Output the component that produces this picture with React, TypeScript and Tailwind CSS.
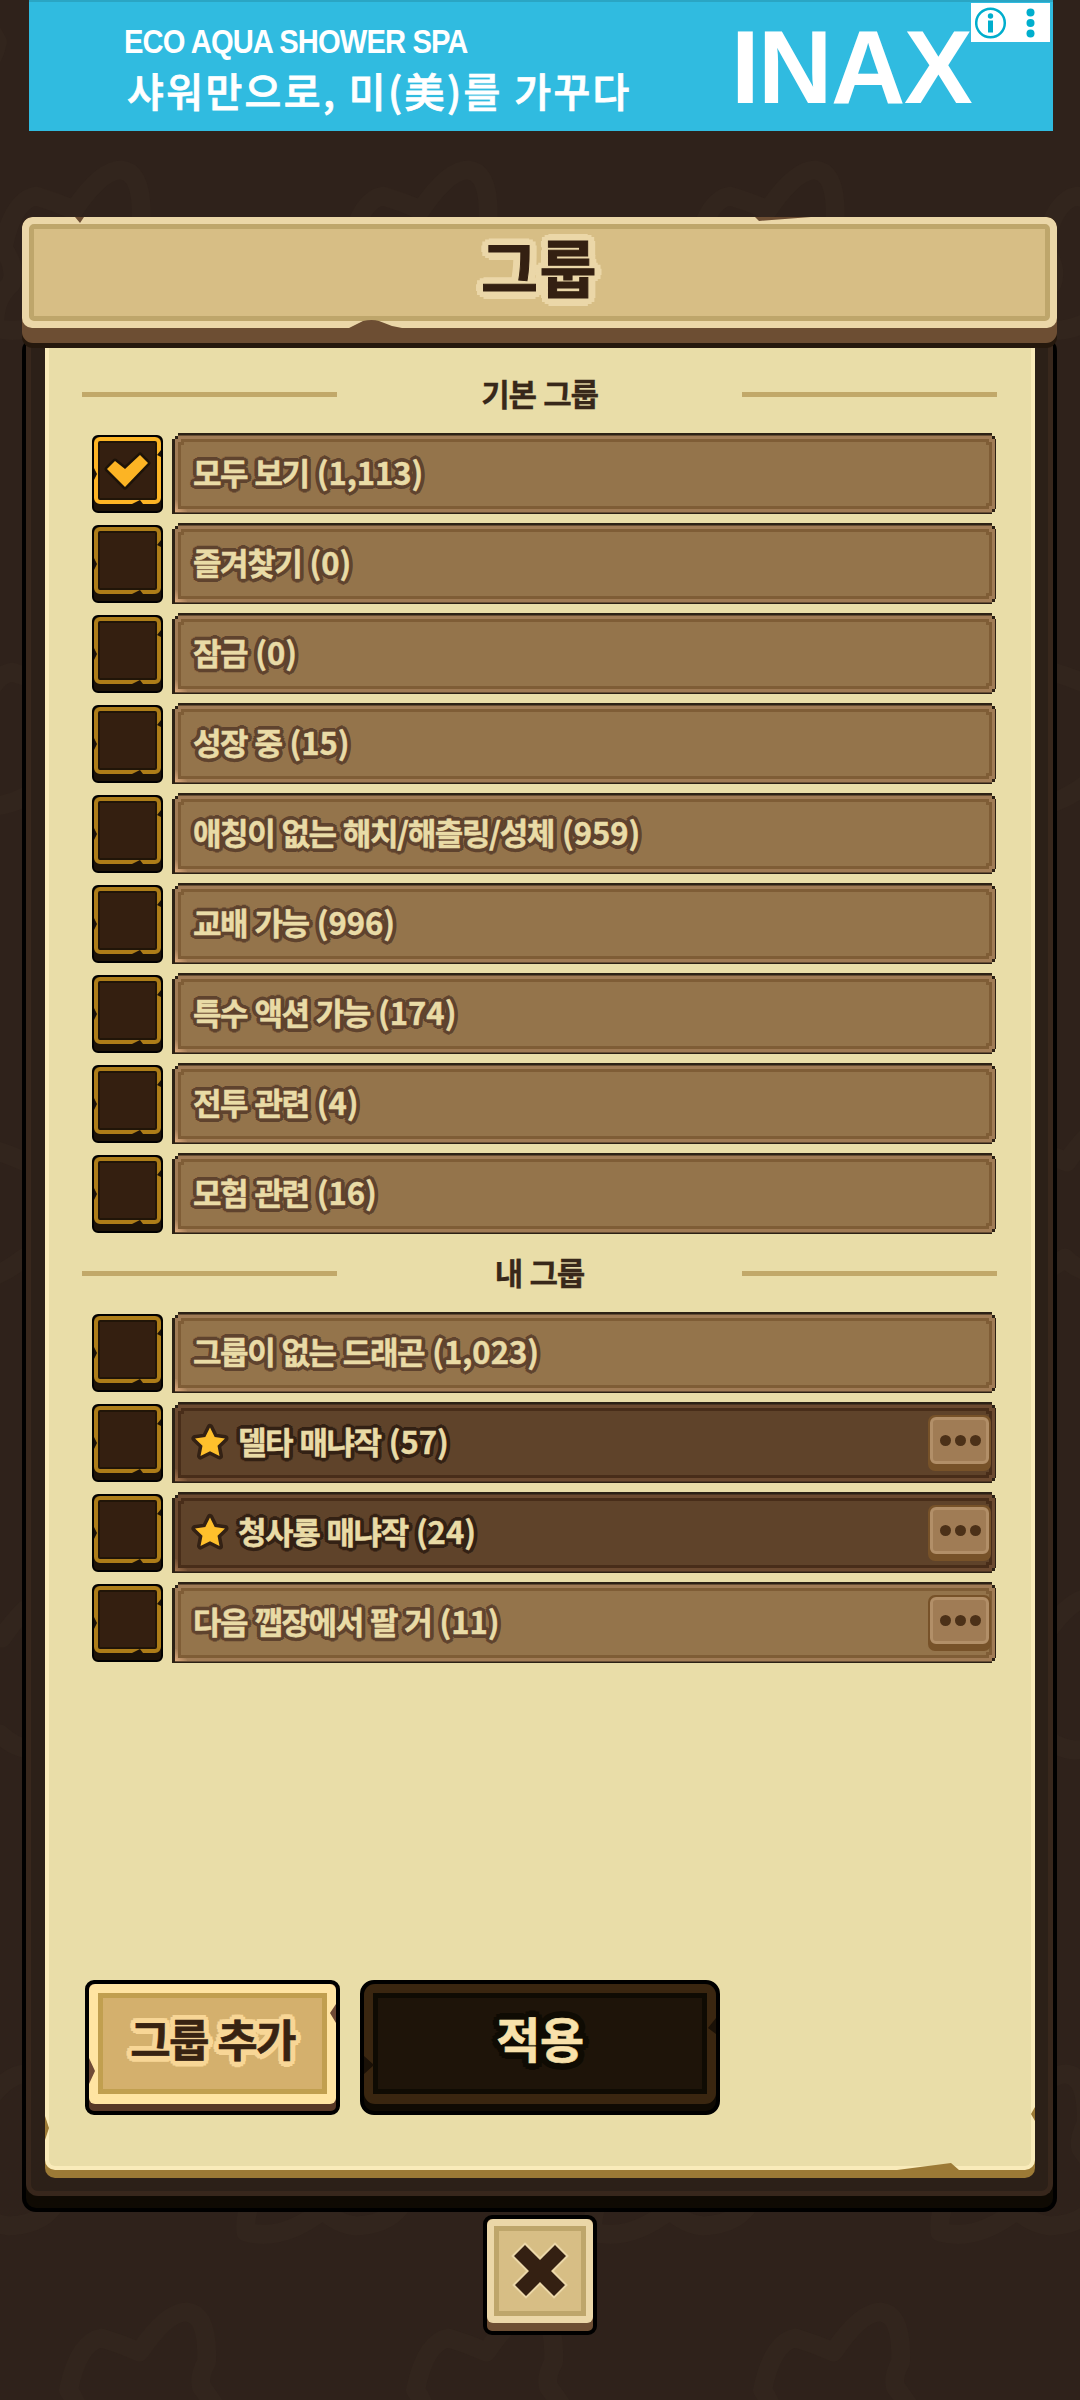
import { ReactNode } from "react";

const KR = "font-['Noto_Sans_CJK_KR',sans-serif]";

/* Rounded text outline: twelve hard shadows on a circle of radius --o in colour --c. */
const OUTLINE =
  "[text-shadow:var(--o)_0_var(--c),calc(var(--o)*0.866)_calc(var(--o)*0.5)_var(--c),calc(var(--o)*0.5)_calc(var(--o)*0.866)_var(--c),0_var(--o)_var(--c),calc(var(--o)*-0.5)_calc(var(--o)*0.866)_var(--c),calc(var(--o)*-0.866)_calc(var(--o)*0.5)_var(--c),calc(var(--o)*-1)_0_var(--c),calc(var(--o)*-0.866)_calc(var(--o)*-0.5)_var(--c),calc(var(--o)*-0.5)_calc(var(--o)*-0.866)_var(--c),0_calc(var(--o)*-1)_var(--c),calc(var(--o)*0.5)_calc(var(--o)*-0.866)_var(--c),calc(var(--o)*0.866)_calc(var(--o)*-0.5)_var(--c)]";

type Group = { name: string; count: string; checked?: boolean; starred?: boolean; menu?: boolean };

const defaultGroups: Group[] = [
  { name: "모두 보기", count: "(1,113)", checked: true },
  { name: "즐겨찾기", count: "(0)" },
  { name: "잠금", count: "(0)" },
  { name: "성장 중", count: "(15)" },
  { name: "애칭이 없는 해치/해츨링/성체", count: "(959)" },
  { name: "교배 가능", count: "(996)" },
  { name: "특수 액션 가능", count: "(174)" },
  { name: "전투 관련", count: "(4)" },
  { name: "모험 관련", count: "(16)" },
];

const myGroups: Group[] = [
  { name: "그룹이 없는 드래곤", count: "(1,023)" },
  { name: "델타 매냐작", count: "(57)", starred: true, menu: true },
  { name: "청사룡 매냐작", count: "(24)", starred: true, menu: true },
  { name: "다음 깹장에서 팔 거", count: "(11)", menu: true },
];

/* Faint dragon outlines repeated in staggered rows over the wall behind the dialog. */
function Backdrop() {
  const rows = Array.from({ length: 11 }, (_, i) => i - 1);
  return (
    <svg className="absolute inset-0 h-full w-full" aria-hidden="true">
      {rows.map((r) =>
        [0, 1, 2, 3, 4].map((c) => (
          <path
            key={`${r}-${c}`}
            transform={`translate(${((121 + r * 161.5 + 694) % 347) + (c - 1) * 347} ${160 + r * 238})`}
            d="M-118 88Q-108 40-85 36Q-65 42-47 50Q-20 10 0 10Q22 12 20 60Q12 75 15 85Q30 105 38 120Q30 160-16 162Q-35 160-49 146Q-90 178-126 168Q-128 140-110 124Q-104 108-118 88Z"
            fill="none"
            stroke="#32251d"
            strokeWidth="19"
            strokeLinejoin="round"
          />
        )),
      )}
    </svg>
  );
}

function AdBanner() {
  return (
    <div className="relative ml-[29px] flex h-[131px] w-[1024px] border-t-2 border-[#2aa5c4] bg-[#30bbe0] text-white">
      <div className="w-[702px] shrink-0 pl-[95px]">
        <div className="mt-[22px] h-[36px] origin-left scale-x-[0.884] whitespace-nowrap font-['Liberation_Sans',sans-serif] text-[33px] font-bold leading-[36px] tracking-[-1px]">
          ECO AQUA SHOWER SPA
        </div>
        <div className={`${KR} mt-[8px] ml-[3px] whitespace-nowrap text-[40px] font-medium leading-[44px] tracking-[2.4px] [-webkit-text-stroke:0.8px_white]`}>
          샤워만으로, 미(美)를 가꾸다
        </div>
      </div>
      <div className="mt-[10px] whitespace-nowrap font-['Liberation_Sans',sans-serif] text-[103px] font-bold leading-[112px] tracking-[-1.500px]">
        INAX
      </div>
      <div className="absolute right-[3px] top-[1px] flex h-[39px] w-[79px] items-center bg-white pl-[4px]">
        <svg width="75" height="38" viewBox="0 0 75 38" fill="#00aecd">
          <circle cx="15.500" cy="19" r="14.300" fill="none" stroke="#00aecd" strokeWidth="2.5" />
          <circle cx="15.500" cy="12" r="2.7" />
          <rect x="13" y="16.500" width="5" height="12" />
          <circle cx="55.500" cy="8.500" r="4" />
          <circle cx="55.500" cy="19" r="4" />
          <circle cx="55.500" cy="29.500" r="4" />
        </svg>
      </div>
    </div>
  );
}

function Header() {
  return (
    <header className="relative z-10 mx-[22px] h-[131px] w-[1035px] rounded-[11px] bg-[#25180d]">
      <div className="h-[126px] overflow-hidden rounded-[11px] bg-[#6d4e33]">
        <div className="relative h-[111px] rounded-[10px] bg-[#ebd7a8] p-[7px]">
          <div className="flex h-[97px] items-center justify-center rounded-[5px] border-[5px] border-[#bea66b] bg-[#d7be85] pb-[13px]">
            <h1 className={`${KR} ${OUTLINE} text-[62px] font-bold leading-[80px] tracking-[1.500px] text-[#342012] [--c:#ebd7a8] [--o:7.5px] [-webkit-text-stroke:1px_#342012]`}>
              그룹
            </h1>
          </div>
          <svg className="absolute inset-0" width="1035" height="111" fill="#6d4e33">
            <path d="M53 0h9l-4 6zM733 0h56l-52 4zM327 111l14-7q9-2 16 0l13 5 10 2z" />
          </svg>
        </div>
      </div>
    </header>
  );
}

function SectionTitle({ children }: { children: ReactNode }) {
  return (
    <div className="flex h-[40px] items-center justify-between pr-px">
      <span className="h-[5px] w-[255px] bg-[#c1a869]" />
      <h2 className={`${KR} pb-[2px] text-[31px] font-bold leading-[40px] tracking-[-1.2px] text-[#38281a] [-webkit-text-stroke:0.3px_#38281a] [word-spacing:1.5px]`}>
        {children}
      </h2>
      <span className="h-[5px] w-[255px] bg-[#c1a869]" />
    </div>
  );
}

function CheckBox({ checked }: { checked?: boolean }) {
  return (
    <div className="relative mt-[2px] h-[78px] w-[71px] rounded-[6px] border-2 border-black bg-[#1d1308]">
      <div
        className={`h-[67px] w-[67px] rounded-[6px] border-4 ${checked ? "border-[#fcb424]" : "border-[#ad7d18]"} bg-[#211508] p-[2px]`}
      >
        <div className="h-full w-full bg-[#341f10]" />
      </div>
      <svg className="absolute -left-[2px] -top-[2px]" width="71" height="78" fill="#1d1308">
        <path d="M2 33l3 6-3 6zM69 15l-4 5 4 2zM40 69l8-4 3 4z" />
        {checked && (
          <path
            d="M23 26l-8 8 18 18 23-24-8-8-15 14z"
            fill="#fcb424"
            stroke="#1d1308"
            strokeWidth="5"
            strokeLinejoin="round"
            className="[paint-order:stroke]"
          />
        )}
      </svg>
    </div>
  );
}

function MenuButton() {
  return (
    <button className="mt-[13px] mr-[5px] flex h-[56px] w-[63px] items-start rounded-[7px] bg-[#775229] px-[2px] pt-[2px]">
      <span className="flex h-[47px] w-full items-center justify-center gap-[4.400px] rounded-[6px] border-[3px] border-[#b28f68] bg-[#a07c55] pl-[2px]">
        <i className="h-[11px] w-[11px] rounded-full bg-[#4c3118]" />
        <i className="h-[11px] w-[11px] rounded-full bg-[#4c3118]" />
        <i className="h-[11px] w-[11px] rounded-full bg-[#4c3118]" />
      </span>
    </button>
  );
}

function Star() {
  return (
    <svg width="40" height="40" viewBox="0 0 40 40" className="-ml-[3px] mr-[8px] mt-[20px] shrink-0">
      <path
        d="M20 5.500l4.700 9.500 10.300 1.500-7.500 7.200 2 10.300-9.500-4.800-9.500 4.800 2-10.300-7.500-7.200 10.300-1.500z"
        fill="#ffc02c"
        stroke="#332114"
        strokeWidth="7"
        strokeLinejoin="round"
        className="[paint-order:stroke]"
      />
    </svg>
  );
}

function GroupRow({ group }: { group: Group }) {
  const dark = group.starred;
  return (
    <li className="flex h-[81px] gap-[9px] pl-[10px]">
      <CheckBox checked={group.checked} />
      <div className="relative h-[81px] w-[824px]">
        <span className="absolute inset-0 bg-[#2c2115] [clip-path:polygon(6px_0,820px_0,820px_3px,823px_3px,823px_6px,824px_6px,824px_76px,823px_76px,823px_79px,820px_79px,820px_81px,0_81px,0_6px,3px_6px,3px_3px,6px_3px)]" />
        <span
          className={`absolute inset-0 ${dark ? "bg-[#6c4a30]" : "bg-[#a07b55]"} [clip-path:polygon(6px_2.5px,820px_2.5px,820px_6px,823px_6px,823px_76px,820px_76px,820px_79.5px,3px_79.5px,3px_6px,6px_6px)]`}
        />
        <span className={`absolute bottom-[2px] left-[3px] h-[12px] w-[12px] bg-gradient-to-tr ${dark ? "from-[#a5754f]" : "from-[#e0ac80]"} to-transparent to-60%`} />
        <span
          className={`absolute inset-0 ${dark ? "bg-[#482d19]" : "bg-[#7f5d36]"} [clip-path:polygon(9px_6px,817px_6px,817px_9px,820px_9px,820px_73px,817px_73px,817px_76px,6px_76px,6px_9px,9px_9px)]`}
        />
        <span
          className={`absolute inset-0 ${dark ? "bg-[#5f432a]" : "bg-[#94744b]"} [clip-path:polygon(12px_9px,814px_9px,814px_12px,817px_12px,817px_70px,814px_70px,814px_73px,9px_73px,9px_12px,12px_12px)]`}
        />
        <div className="relative flex h-full items-start justify-between pl-[21px]">
          <div className="flex h-full items-start">
            {group.starred && <Star />}
            <span
              className={`${KR} ${OUTLINE} mt-[19px] whitespace-nowrap text-[31px] font-bold leading-[40px] text-[#e9dba6] [--o:4px] [-webkit-text-stroke:0.5px_#e9dba6] ${
                dark ? "[--c:#332114]" : "[--c:#5f432e]"
              }`}
            >
              <span className="mr-px tracking-[-1.400px] [word-spacing:1.5px]">{group.name}</span> {group.count}
            </span>
          </div>
          {group.menu && <MenuButton />}
        </div>
      </div>
    </li>
  );
}

export default function App() {
  return (
    <div className="relative h-[2400px] w-[1080px] overflow-hidden bg-[#2f221b]">
      <Backdrop />
      <div className="relative flex flex-col">
        <AdBanner />
        <div className="mt-[86px]">
          <Header />
          <main className="mx-[22px] -mt-[11px] h-[1875px] w-[1035px] rounded-[14px] border-x-4 border-b-4 border-black bg-[#0f0a03]">
            <div className="h-[1859px] rounded-b-[12px] border-x-[5px] border-b-[5px] border-[#38271c] bg-[#2c2018] pb-[13px] pl-[14px] pr-[13px]">
              <div className="relative h-[1841px] rounded-b-[10px] bg-[#9c7a36] pb-[8px]">
                <div className="flex h-[1833px] flex-col rounded-b-[10px] border-x-4 border-b-4 border-[#f9ebba] bg-[#e9dda8] px-[33px] pt-[37px]">
                  <SectionTitle>기본 그룹</SectionTitle>
                  <ul className="mt-[19px] flex flex-col gap-[9px]">
                    {defaultGroups.map((g) => (
                      <GroupRow key={g.name} group={g} />
                    ))}
                  </ul>
                  <div className="mt-[19px]">
                    <SectionTitle>내 그룹</SectionTitle>
                  </div>
                  <ul className="mt-[19px] flex flex-col gap-[9px]">
                    {myGroups.map((g) => (
                      <GroupRow key={g.name} group={g} />
                    ))}
                  </ul>
                  <div className="mt-auto mb-[51px] ml-[3px] flex gap-[20px]">
                    <button className="relative flex h-[135px] w-[255px] items-start rounded-[9px] border-4 border-black bg-[#573726]">
                      <span className="block h-[120px] w-full rounded-[6px] bg-[#ffe4a2] p-[9px] pb-[10px]">
                        <span className="flex h-full items-center justify-center border-[5px] border-[#c19f4f] bg-[#d4b06d] pb-[12px]">
                          <span className={`${KR} ${OUTLINE} text-[44px] font-bold leading-[60px] tracking-[-1.800px] text-[#382312] [--c:#f8d696] [--o:5.5px] [-webkit-text-stroke:0.6px_#382312] [word-spacing:1.5px]`}>
                            그룹 추가
                          </span>
                        </span>
                      </span>
                      <svg className="absolute inset-0" width="247" height="127" fill="#6f4a35">
                        <path d="M0 74l6 13-6 13zM247 20l-6 9 6 10z" />
                      </svg>
                    </button>
                    <button className="relative flex h-[135px] w-[360px] items-start rounded-[14px] border-4 border-black bg-[#0f0a03]">
                      <span className="block h-[120px] w-full rounded-[11px] bg-[#3a2610] p-[9px] pb-[10px]">
                        <span className="flex h-full items-center justify-center border-[5px] border-[#0f0b03] bg-[#1e1409] pb-[14px]">
                          <span className={`${KR} ${OUTLINE} text-[48px] font-bold leading-[60px] tracking-[-0.500px] text-[#f8e1ab] [--c:#0f0b03] [--o:7px] [-webkit-text-stroke:0.6px_#f8e1ab]`}>
                            적용
                          </span>
                        </span>
                      </span>
                      <svg className="absolute inset-0" width="352" height="127" fill="#1a1107">
                        <path d="M0 72l10 9-10 9zM352 34l-8 10 8 6z" />
                      </svg>
                    </button>
                  </div>
                </div>
                <svg className="absolute inset-0" width="990" height="1841" fill="#9c7a36">
                  <path d="M0 1779l4 12-4 12zM990 1770l-4 7 4 7zM852 1833l54-7 8 7z" />
                </svg>
              </div>
            </div>
          </main>
        </div>
        <button className="relative mx-auto mt-[3px] flex h-[120px] w-[114px] items-start rounded-[9px] border-4 border-black bg-[#6d4e33]">
          <span className="block h-[104px] w-full rounded-[6px] bg-[#ebd7a8] p-[7px]">
            <span className="flex h-full items-center justify-center border-[5px] border-[#bea66b] bg-[#d7be85]">
              <svg width="60" height="60" viewBox="0 0 60 60">
                <path
                  d="M15 4l15 15 15-15 11 11-15 15 14 14-11 11-14-14-14 14-11-11 14-14-15-15z"
                  fill="#342012"
                  stroke="#ebd7a8"
                  strokeWidth="4"
                  className="[paint-order:stroke]"
                />
              </svg>
            </span>
          </span>
        </button>
      </div>
    </div>
  );
}
